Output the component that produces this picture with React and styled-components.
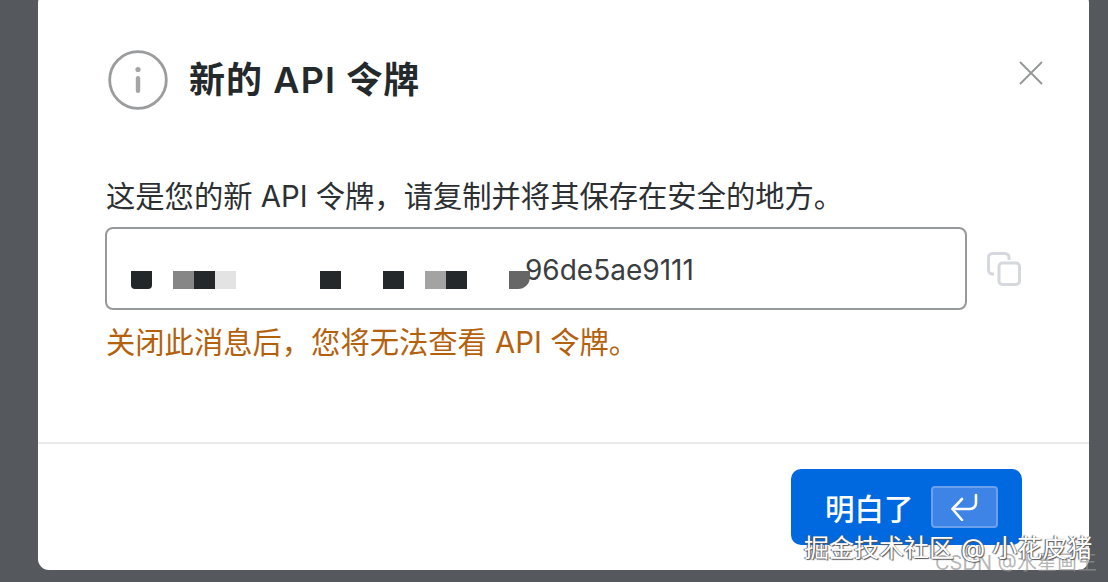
import React from "react";
import styled, { createGlobalStyle } from "styled-components";

const sans = `Inter, "Noto Sans CJK SC", sans-serif`;
const comma = "\uFF0C";

const Global = createGlobalStyle`
  html, body {
    margin: 0;
    height: 100%;
    overflow: hidden;
    background: #55585d;
    font-family: ${sans};
  }
`;

const Page = styled.div`
  position: relative;
  width: 1108px;
  height: 582px;
  overflow: hidden;
  background: #55585d;
`;

const Modal = styled.div`
  position: absolute;
  left: 38px;
  top: -8px;
  width: 1051px;
  height: 578px;
  display: flex;
  flex-direction: column;
  background: #fff;
  border-radius: 11px;
`;

const Header = styled.header`
  display: flex;
  align-items: center;
  justify-content: space-between;
  height: 60px;
  margin-top: 58px;
  padding: 0 46px 0 70px;
`;

const TitleGroup = styled.div`
  display: flex;
  align-items: center;
  gap: 21px;
`;

const Title = styled.h2`
  margin: 0;
  font-size: 36px;
  letter-spacing: 1.1px;
  line-height: 60px;
  font-weight: 600;
  color: #24292b;
`;

const CloseButton = styled.button`
  display: flex;
  margin-bottom: 14px;
  padding: 0;
  border: 0;
  background: none;
`;

const Body = styled.div`
  flex: 1;
  padding: 66px 67px 0;
`;

const Lead = styled.p`
  margin: 0 0 10px;
  padding-left: 1px;
  font-size: 29.3px;
  line-height: 41px;
  color: #2c3033;
`;

const TokenRow = styled.div`
  display: flex;
  align-items: center;
  gap: 20px;
`;

const TokenField = styled.div`
  display: flex;
  align-items: center;
  box-sizing: border-box;
  width: 862px;
  height: 83px;
  padding: 0 0 0 24px;
  border: 2px solid #96999c;
  border-radius: 8px;
`;

const Mosaic = styled.div`
  display: grid;
  grid-template-columns: repeat(19, 21px);
  grid-auto-rows: 18px;
  margin-top: 23px;
  position: relative;
  z-index: 1;
`;

const MosaicCell = styled.span`
  background: ${(p) => p.$tone};
  border-radius: ${(p) => p.$radius || 0};
`;

const TokenText = styled.span`
  margin: 0 0 0 -5px;
  font-size: 28px;
  line-height: 40px;
  color: #3a3e41;
  position: relative;
  top: 1px;
`;

const Warning = styled.p`
  margin: 12px 0 0;
  padding-left: 1px;
  font-size: 29.3px;
  line-height: 41px;
  color: #b4610e;
`;

const Footer = styled.footer`
  display: flex;
  justify-content: flex-end;
  height: 128px;
  box-sizing: border-box;
  padding: 25px 67px 0 0;
  border-top: 2px solid #e9eaeb;
`;

const PrimaryButton = styled.button`
  display: flex;
  align-items: center;
  gap: 17px;
  width: 231px;
  height: 76px;
  padding: 0 0 0 34px;
  border: 0;
  border-radius: 10px;
  background: #0069e0;
  color: #fff;
  font-family: ${sans};
  font-size: 29.5px;
  font-weight: 500;
`;

const KeyHint = styled.span`
  display: flex;
  align-items: center;
  justify-content: center;
  box-sizing: border-box;
  width: 67px;
  height: 42px;
  background: #3e84e6;
  border: 2px solid #6ba0ec;
  border-radius: 4px;
`;

const Watermark = styled.div`
  position: absolute;
  white-space: nowrap;
  pointer-events: none;
  left: ${(p) => p.$left}px;
  top: ${(p) => p.$top}px;
  font-size: ${(p) => p.$size}px;
  line-height: 1;
  color: ${(p) => p.$color};
  text-shadow: ${(p) => p.$shadow};
`;

const cells = [
  { at: 0, tone: "#23272a", radius: "0 0 4px 4px" },
  { at: 2, tone: "#868686" },
  { at: 3, tone: "#25282a" },
  { at: 4, tone: "#e3e3e3" },
  { at: 9, tone: "#25282a" },
  { at: 12, tone: "#25282a" },
  { at: 14, tone: "#a3a3a3" },
  { at: 15, tone: "#25282a" },
  { at: 18, tone: "#666666", radius: "0 0 12px 0" },
];

const InfoIcon = () => (
  <svg width="60" height="60" viewBox="0 0 60 60" fill="none">
    <circle cx="30" cy="30" r="28.3" stroke="#9a9c9d" strokeWidth="2.8" />
    <circle cx="30" cy="19.5" r="2.6" fill="#a3a5a6" />
    <rect x="27.8" y="26" width="4.4" height="17" rx="2.2" fill="#a3a5a6" />
  </svg>
);

const CloseIcon = () => (
  <svg width="24" height="24" viewBox="0 0 24 24" fill="none">
    <path d="M1.5 1.5L22.5 22.5M22.5 1.5L1.5 22.5" stroke="#939596" strokeWidth="1.8" strokeLinecap="round" />
  </svg>
);

const CopyIcon = () => (
  <svg width="34" height="34" viewBox="0 0 34 34" fill="none" stroke="#d5d8dd" strokeWidth="3">
    <path d="M7 22H5.5a4 4 0 0 1-4-4V5.5a4 4 0 0 1 4-4H18a4 4 0 0 1 4 4V8" />
    <rect x="12" y="11" width="20.5" height="21.5" rx="3.5" />
  </svg>
);

const EnterIcon = () => (
  <svg width="28" height="28" viewBox="0 0 28 28" fill="none" stroke="#fff" strokeWidth="2.6">
    <path d="M26 2v8a6 6 0 0 1-6 6H3" strokeLinecap="round" />
    <path d="M12 6L2.5 16l9.5 11" strokeLinecap="round" strokeLinejoin="round" />
  </svg>
);

const App = () => (
  <Page>
    <Global />
    <Modal>
      <Header>
        <TitleGroup>
          <InfoIcon />
          <Title>新的 API 令牌</Title>
        </TitleGroup>
        <CloseButton>
          <CloseIcon />
        </CloseButton>
      </Header>
      <Body>
        <Lead>这是您的新 API 令牌{comma}请复制并将其保存在安全的地方。</Lead>
        <TokenRow>
          <TokenField>
            <Mosaic>
              {Array.from({ length: 19 }, (_, i) => {
                const cell = cells.find((c) => c.at === i);
                return (
                  <MosaicCell
                    key={i}
                    $tone={cell ? cell.tone : "transparent"}
                    $radius={cell && cell.radius}
                  />
                );
              })}
            </Mosaic>
            <TokenText>96de5ae9111</TokenText>
          </TokenField>
          <CopyIcon />
        </TokenRow>
        <Warning>关闭此消息后{comma}您将无法查看 API 令牌。</Warning>
      </Body>
      <Footer>
        <PrimaryButton>
          明白了
          <KeyHint>
            <EnterIcon />
          </KeyHint>
        </PrimaryButton>
      </Footer>
    </Modal>
    <Watermark $left={935} $top={553} $size={20} $color="rgba(150,150,150,0.7)" $shadow="none">
      CSDN @水星画王
    </Watermark>
    <Watermark
      $left={804}
      $top={536}
      $size={25}
      $color="#fff"
      $shadow="1px 1px 1px #555, -1px 0 1px #555"
    >
      掘金技术社区 @ 小花皮猪
    </Watermark>
  </Page>
);

export default App;
